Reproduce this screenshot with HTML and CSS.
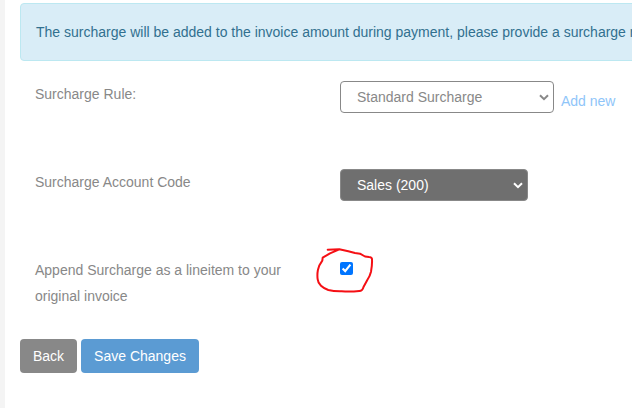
FILE: index.html
```html
<!DOCTYPE html>
<html lang="en">

<head>
    <meta charset="UTF-8">
    <meta name="viewport" content="width=device-width, initial-scale=1.0">
    <title>Surcharge Settings</title>
    <link rel="stylesheet" href="styles.css">
</head>

<body>
    <form class="settings">
        <div class="alert">The surcharge will be added to the invoice amount during payment, please provide a surcharge rule</div>

        <div class="form-row">
            <label class="form-label" for="rule">Surcharge Rule:</label>
            <div class="form-field">
                <div class="select-wrap">
                    <select id="rule" class="select select-rule">
                        <option>Standard Surcharge</option>
                    </select>
                    <svg class="arrow" width="10" height="7" viewBox="0 0 10 7">
                        <path d="M1 1.200 L5 5.200 L9 1.200" />
                    </svg>
                </div>
                <a class="add-link" href="#">Add new</a>
            </div>
        </div>

        <div class="form-row">
            <label class="form-label" for="account">Surcharge Account Code</label>
            <div class="form-field">
                <div class="select-wrap">
                    <select id="account" class="select select-account">
                        <option>Sales (200)</option>
                    </select>
                    <svg class="arrow arrow-light" width="10" height="7" viewBox="0 0 10 7">
                        <path d="M1 1.200 L5 5.200 L9 1.200" />
                    </svg>
                </div>
            </div>
        </div>

        <div class="form-row form-row-last">
            <label class="form-label" for="append">Append Surcharge as a lineitem to your original invoice</label>
            <div class="form-field">
                <input type="checkbox" id="append" class="checkbox" checked>
                <!-- hand drawn circle around the checkbox -->
                <svg class="marker" width="60" height="50" viewBox="0 0 60 50">
                    <path d="M13.700 4.700 L25.300 4.300 L34.300 6.300 L41 8 L46 8.700 L51 11.500 L55 12 Q57.500 12 58 14 Q58.300 20 57 26.700 Q56 31 53.300 35 L49.500 42 Q48.500 46 45.300 46 Q36 47 27.700 46.300 Q20 46.500 14.300 45 Q10 43.500 7 40.700 Q4 38 3.700 34.300 Q3 30 3.900 25 Q5 20 8.300 15.700 L8.700 12.700 L16 8.300 L25.300 4.300" />
                </svg>
            </div>
        </div>

        <div class="actions">
            <button type="button" class="btn btn-back">Back</button>
            <button type="button" class="btn btn-save">Save Changes</button>
        </div>
    </form>
</body>

</html>
```

FILE: styles.css
```css
* {
    box-sizing: border-box;
}

body {
    margin: 0;
    height: 408px;
    overflow: hidden;
    border-left: 5px solid #f4f4f4;
    background: #fff;
    color: #888;
    font-family: "Liberation Sans", Arial, sans-serif;
    font-size: 14px;
    line-height: 26px;
}

.settings {
    padding: 3px 0 0 15px;
}

.alert {
    width: 700px;
    height: 58px;
    margin-bottom: 20px;
    padding: 15px;
    border: 1px solid #bce8f1;
    border-radius: 4px;
    background: #d9edf7;
    color: #31708f;
    white-space: nowrap;
}

.form-row {
    display: flex;
    height: 88px;
    padding-left: 15px;
}

.form-row-last {
    height: 82px;
}

.form-label {
    width: 275px;
    margin-right: 30px;
}

.form-field {
    position: relative;
    display: flex;
    align-items: flex-start;
}

.select-wrap {
    position: relative;
    display: flex;
}

.select {
    height: 32px;
    padding: 0 16px;
    border: 1px solid #888;
    border-radius: 4px;
    background: #fff;
    color: #888;
    font-family: inherit;
    font-size: 14px;
    appearance: none;
}

.select-rule {
    width: 214px;
}

.select-account {
    width: 188px;
    background: #6f6f6f;
    color: #fff;
}

.arrow {
    position: absolute;
    top: 13px;
    right: 5px;
    fill: none;
    stroke: #888;
    stroke-width: 2;
    pointer-events: none;
}

.arrow-light {
    stroke: #fff;
}

.add-link {
    margin: 7px 0 0 7px;
    color: #8fc5f9;
    text-decoration: none;
}

.checkbox {
    width: 13px;
    height: 13px;
    margin: 5px 0 0;
}

.marker {
    position: absolute;
    top: -12px;
    left: -26px;
    fill: none;
    stroke: #f50f14;
    stroke-width: 2;
    stroke-linecap: round;
    stroke-linejoin: round;
    pointer-events: none;
}

.actions {
    display: flex;
    gap: 4px;
}

.btn {
    height: 34px;
    padding: 0;
    border: none;
    border-radius: 4px;
    color: #fff;
    font-family: inherit;
    font-size: 14px;
}

.btn-back {
    width: 57px;
    background: #888;
}

.btn-save {
    width: 118px;
    background: #5b9bd3;
}
```
